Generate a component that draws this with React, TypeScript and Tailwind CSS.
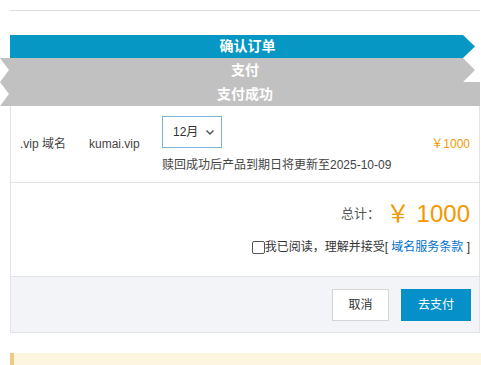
import { useState } from 'react';

const font = { fontFamily: '"Liberation Sans", Arial, "Noto Sans CJK SC", sans-serif' };

const App = () => {
  const [agreed, setAgreed] = useState(false);

  return (
    <div className="w-[481px] h-[365px] bg-white overflow-hidden text-[#333]" style={font}>
      {/* top rule */}
      <div className="ml-[10px] mr-[1px] pt-[10px]">
        <div className="border-t border-[#dcdcdc]" />
      </div>

      {/* steps */}
      <div className="mt-[24px] flex flex-col">
        <div className="ml-[10px] w-[465px] h-[23px] bg-[#0697c5] text-white text-[14px] font-bold flex items-center justify-center [clip-path:polygon(0_0,calc(100%-12px)_0,100%_50%,calc(100%-12px)_100%,0_100%)]">
          <span className="pl-[10px]">确认订单</span>
        </div>
        <div className="w-[475px] h-[24px] bg-[#c1c1c1] text-white text-[14px] font-bold flex items-center justify-center [clip-path:polygon(0_0,calc(100%-12px)_0,100%_50%,calc(100%-12px)_100%,0_100%,9px_50%)]">
          <span className="pl-[15px]">支付</span>
        </div>
        <div className="w-[480px] h-[24px] bg-[#c1c1c1] text-white text-[14px] font-bold flex items-center justify-center [clip-path:polygon(0_0,100%_0,100%_100%,0_100%,9px_50%)]">
          <span className="pl-[10px]">支付成功</span>
        </div>
      </div>

      {/* order card */}
      <div className="ml-[10px] w-[470px] border border-t-0 border-[#e1e3e8]">
        <div className="h-[77px] flex items-center border-b border-[#e1e3e8] text-[12px] text-[#444]">
          <div className="pl-[9px] w-[78px]">.vip 域名</div>
          <div className="w-[73px]">kumai.vip</div>
          <div className="flex flex-col pt-[2px]">
            <div className="w-[60px] h-[32px] border border-[#7fb3d9] flex items-center justify-between pl-[10px] pr-[6px] text-[12px] text-[#333]">
              <span>12月</span>
              <svg width="10" height="7" viewBox="0 0 10 7" fill="none">
                <path d="M1.5 1.5 5 5l3.5-3.5" stroke="#555" strokeWidth="1.5" />
              </svg>
            </div>
            <div className="mt-[8px] text-[12px] text-[#444] whitespace-nowrap">赎回成功后产品到期日将更新至2025-10-09</div>
          </div>
          <div className="ml-auto pr-[9px] text-[12px] text-[#f39800]">￥1000</div>
        </div>

        <div className="h-[93px] flex flex-col items-end pr-[9px]">
          <div className="mt-[17px] flex items-center">
            <span className="text-[13px] text-[#555] mr-[6px]">总计：</span>
            <span className="text-[24px] text-[#f39800] leading-[28px]">￥ 1000</span>
          </div>
          <label className="mt-[10px] flex items-center text-[12px] text-[#333]">
            <input
              type="checkbox"
              checked={agreed}
              onChange={(e) => setAgreed(e.target.checked)}
              className="appearance-none w-[13px] h-[13px] border border-[#555] rounded-[2px] bg-white m-0"
            />
            <span>我已阅读，理解并接受[ <a className="text-[#0070cc]">域名服务条款</a> ]</span>
          </label>
        </div>

        <div className="h-[56px] bg-[#f3f4f7] border-t border-[#e1e3e8] flex items-center justify-end gap-[12px] pr-[8px]">
          <button className="w-[57px] h-[32px] border border-[#d5d5d5] bg-white text-[12px] text-[#333]">取消</button>
          <button className="w-[70px] h-[32px] bg-[#0690c9] text-[12px] text-white">去支付</button>
        </div>
      </div>

      {/* notice */}
      <div className="mt-[20px] ml-[10px] h-[20px] bg-[#fdf5df] border-l-[4px] border-[#eccc84]" />
    </div>
  );
};

export default App;
